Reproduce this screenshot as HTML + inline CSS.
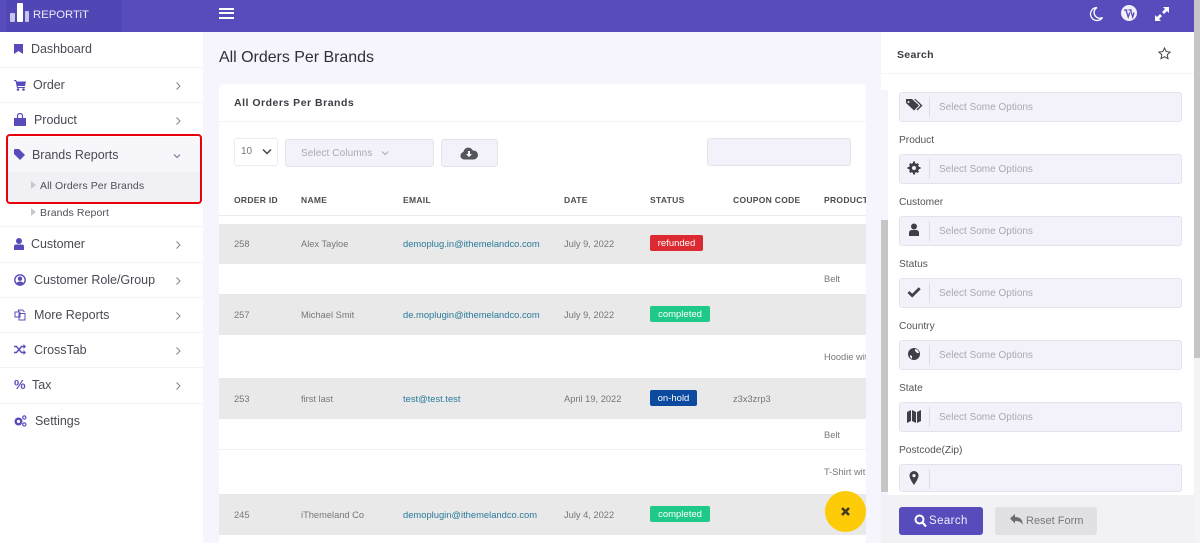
<!DOCTYPE html>
<html><head><meta charset="utf-8"><title>All Orders Per Brands</title>
<style>
html,body{margin:0;padding:0}
body{width:1200px;height:543px;overflow:hidden;position:relative;background:#f6f4fd;font-family:"Liberation Sans",sans-serif}
div,span,svg{position:absolute;box-sizing:border-box}
.t{white-space:nowrap;line-height:16px}
.m{font-size:12.5px;color:#4a4a55;letter-spacing:-.03px}
.l{left:0;width:203px;height:1px;background:#f3f2f7}
.chev{width:10px;height:12px;left:173px}
.ic{fill:#584cbd}
.h{font-size:8.5px;font-weight:bold;color:#4b4b52;letter-spacing:.3px;top:192px}
.c{font-size:9.300px;color:#777;margin-top:1px}
.e{font-size:9.400px;color:#2a7a9a;margin-top:1px}
.row{left:219px;width:647px;background:#e9e9e9}
.b{height:16px;border-radius:2px;color:#fff;font-size:9.500px;line-height:17px;text-align:center}
.f{left:899px;width:283px;height:30px;background:#f3f2fb;border:1px solid #e4e3ec;border-radius:3px}
.f i{position:absolute;left:29px;top:4px;width:1px;height:20px;background:#dedde6}
.p{font-size:10px;color:#a9a9b3;left:39px;top:7px}
.lab{font-size:10.200px;color:#555;left:899px;margin-top:1px}
.fi{left:6px;top:5px;width:16px;height:16px;fill:#3f3f46}
</style></head><body>

<!-- header -->
<div style="left:0;top:0;width:1194px;height:32px;background:#584cbd"></div>
<div style="left:6px;top:0;width:116px;height:32px;background:#5046b4"></div>
<div style="left:10px;top:13px;width:5px;height:9px;background:#c9c5ea;border-radius:1px"></div>
<div style="left:17px;top:3px;width:6px;height:19px;background:#fff;border-radius:1px"></div>
<div style="left:25px;top:11px;width:4px;height:11px;background:#c9c5ea;border-radius:1px"></div>
<div class="t" style="left:33px;top:7px;font-size:11.300px;color:#eceaf9">REPORTiT</div>
<div style="left:219px;top:8px;width:15px;height:2px;background:#fff"></div>
<div style="left:219px;top:12px;width:15px;height:2px;background:#fff"></div>
<div style="left:219px;top:16.500px;width:15px;height:2px;background:#fff"></div>
<svg style="left:1088px;top:6px" width="16" height="16" viewBox="0 0 16 16"><path d="M9 1.500A6.500 6.500 0 1 0 14.500 11.500 5.500 5.500 0 0 1 9 1.500Z" fill="none" stroke="#fff" stroke-width="1.300"/></svg>
<svg style="left:1121px;top:5px" width="16" height="16" viewBox="0 0 16 16"><circle cx="8" cy="8" r="8" fill="#f0effa"/><path d="M3 5h3.400M5 5l2.200 7 1.600-4.500M7.500 5h3.300M9.600 5l2.100 7 1.400-4.500" fill="none" stroke="#584cbd" stroke-width="1.300"/></svg>
<svg style="left:1155px;top:7px" width="14" height="14" viewBox="0 0 14 14"><path d="M8 0h6v6l-2-2-3 3-2-2 3-3ZM6 14H0V8l2 2 3-3 2 2-3 3Z" fill="#fff"/></svg>

<!-- sidebar -->
<div style="left:0;top:32px;width:203px;height:511px;background:#fff"></div>
<div class="l" style="top:67px"></div><div class="l" style="top:102px"></div><div class="l" style="top:226px"></div><div class="l" style="top:262px"></div><div class="l" style="top:297px"></div><div class="l" style="top:332px"></div><div class="l" style="top:367px"></div><div class="l" style="top:403px"></div>
<div style="left:7px;top:137px;width:193px;height:65px;background:#f7f6fb"></div>
<div style="left:7px;top:172px;width:193px;height:30px;background:#f1f0f5"></div>
<div style="left:6px;top:134px;width:196px;height:70px;border:2.500px solid #e8000b;border-radius:4px"></div>

<svg style="left:14px;top:44px" width="9" height="10" viewBox="0 0 9 10"><path class="ic" d="M0 0h9v10L4.500 7 0 10Z"/></svg>
<div class="t m" style="left:31px;top:41px">Dashboard</div>
<svg style="left:14px;top:79px" width="12" height="12" viewBox="0 0 12 12"><path class="ic" d="M0 1h2.200l.5 1.500H12L11 7H3.700L4 8h7v1H3L1.500 2H0Z"/><circle class="ic" cx="4" cy="10.500" r="1.300"/><circle class="ic" cx="9.500" cy="10.500" r="1.300"/></svg>
<div class="t m" style="left:33px;top:77px">Order</div>
<svg style="left:14px;top:113px" width="12" height="13" viewBox="0 0 12 13"><path class="ic" d="M0 5h12v8H0Z"/><path d="M3.500 5V3a2.500 2.500 0 0 1 5 0v2" fill="none" stroke="#584cbd" stroke-width="1.200"/></svg>
<div class="t m" style="left:34px;top:112px">Product</div>
<svg style="left:14px;top:149px" width="11" height="11" viewBox="0 0 11 11"><path class="ic" d="M0 1q0-1 1-1h4l6 6-5 5-6-6Z"/></svg>
<div class="t m" style="left:32px;top:147px">Brands Reports</div>
<svg style="left:31px;top:181px" width="5" height="8" viewBox="0 0 5 8"><path d="M0 0l5 4-5 4Z" fill="#c8c8cc"/></svg>
<div class="t" style="left:40px;top:178px;font-size:10.500px;color:#4f4f58;letter-spacing:.1px">All Orders Per Brands</div>
<svg style="left:31px;top:208px" width="5" height="8" viewBox="0 0 5 8"><path d="M0 0l5 4-5 4Z" fill="#c8c8cc"/></svg>
<div class="t" style="left:40px;top:205px;font-size:10.500px;color:#4f4f58;letter-spacing:.1px">Brands Report</div>
<svg style="left:14px;top:238px" width="10" height="12" viewBox="0 0 10 12"><circle class="ic" cx="5" cy="3" r="3"/><path class="ic" d="M0 12V8.500Q0 6.500 2 6.500H8Q10 6.500 10 8.500V12Z"/></svg>
<div class="t m" style="left:31px;top:236px">Customer</div>
<svg style="left:14px;top:274px" width="12" height="12" viewBox="0 0 12 12"><circle cx="6" cy="6" r="5.200" fill="none" stroke="#584cbd" stroke-width="1.400"/><circle class="ic" cx="6" cy="4.700" r="2.200"/><path class="ic" d="M2.200 9.500Q3.500 7.500 6 7.500T9.800 9.500Q8 11 6 11T2.200 9.500Z"/></svg>
<div class="t m" style="left:34px;top:272px">Customer Role/Group</div>
<svg style="left:14px;top:309px" width="12" height="12" viewBox="0 0 12 12"><path d="M4.500 3V1h4l2 2M1 3h5v5H1ZM5 4.500h6V11H5Z" fill="none" stroke="#584cbd" stroke-width="1"/></svg>
<div class="t m" style="left:34px;top:307px">More Reports</div>
<svg style="left:14px;top:344px" width="12" height="11" viewBox="0 0 12 11"><path d="M0 2.500h2.500L7.500 8.500H10M0 8.500h2.500L7.500 2.500H10" fill="none" stroke="#584cbd" stroke-width="1.400"/><path class="ic" d="M9.500 0L12 2.500 9.500 5ZM9.500 6L12 8.500 9.500 11Z"/></svg>
<div class="t m" style="left:34px;top:342px">CrossTab</div>
<div class="t" style="left:14px;top:377px;font-size:13px;font-weight:bold;color:#584cbd">%</div>
<div class="t m" style="left:32px;top:377px">Tax</div>
<svg style="left:14px;top:415px" width="13" height="12" viewBox="0 0 13 12"><circle cx="4.500" cy="6.500" r="2.800" fill="none" stroke="#584cbd" stroke-width="2.400"/><circle cx="10.300" cy="2.500" r="1.600" fill="none" stroke="#584cbd" stroke-width="1.200"/><circle cx="10.300" cy="9.500" r="1.600" fill="none" stroke="#584cbd" stroke-width="1.200"/></svg>
<div class="t m" style="left:35px;top:413px">Settings</div>
<svg class="chev" style="top:80px" viewBox="0 0 10 12"><path d="M3.500 2.500L7 6l-3.500 3.500" fill="none" stroke="#85858f" stroke-width="1"/></svg>
<svg class="chev" style="top:115px" viewBox="0 0 10 12"><path d="M3.500 2.500L7 6l-3.500 3.500" fill="none" stroke="#85858f" stroke-width="1"/></svg>
<svg style="left:171px;top:151px" width="12" height="10" viewBox="0 0 12 10"><path d="M3 3.500l3 3 3-3" fill="none" stroke="#6f6f90" stroke-width="1"/></svg>
<svg class="chev" style="top:239px" viewBox="0 0 10 12"><path d="M3.500 2.500L7 6l-3.500 3.500" fill="none" stroke="#85858f" stroke-width="1"/></svg>
<svg class="chev" style="top:275px" viewBox="0 0 10 12"><path d="M3.500 2.500L7 6l-3.500 3.500" fill="none" stroke="#85858f" stroke-width="1"/></svg>
<svg class="chev" style="top:310px" viewBox="0 0 10 12"><path d="M3.500 2.500L7 6l-3.500 3.500" fill="none" stroke="#85858f" stroke-width="1"/></svg>
<svg class="chev" style="top:345px" viewBox="0 0 10 12"><path d="M3.500 2.500L7 6l-3.500 3.500" fill="none" stroke="#85858f" stroke-width="1"/></svg>
<svg class="chev" style="top:380px" viewBox="0 0 10 12"><path d="M3.500 2.500L7 6l-3.500 3.500" fill="none" stroke="#85858f" stroke-width="1"/></svg>

<!-- main -->
<div class="t" style="left:219px;top:49px;font-size:16px;line-height:18px;color:#303038;letter-spacing:-.03px">All Orders Per Brands</div>
<div style="left:219px;top:84px;width:647px;height:459px;background:#fff;border-radius:4px 4px 0 0"></div>
<div class="t" style="left:234px;top:95px;font-size:10.500px;font-weight:bold;color:#3c3c44;letter-spacing:.5px">All Orders Per Brands</div>
<div style="left:219px;top:121px;width:647px;height:1px;background:#f4f4f6"></div>

<div style="left:234px;top:138px;width:44px;height:28px;background:#fff;border:1px solid #ebebf0;border-radius:3px"></div>
<div class="t" style="left:241px;top:144px;font-size:10px;color:#777">10</div>
<svg style="left:261px;top:148px" width="12" height="8" viewBox="0 0 12 8"><path d="M2 1.500l4 4 4-4" fill="none" stroke="#444" stroke-width="1.500"/></svg>
<div style="left:285px;top:139px;width:149px;height:28px;background:#f3f2fa;border:1px solid #e4e3ec;border-radius:3px"></div>
<div class="t" style="left:301px;top:146px;font-size:10px;color:#a9a9b3;letter-spacing:.1px">Select Columns</div>
<svg style="left:380px;top:150px" width="10" height="7" viewBox="0 0 10 7"><path d="M2 1.500l3 3 3-3" fill="none" stroke="#a9a9b3" stroke-width="1"/></svg>
<div style="left:441px;top:139px;width:57px;height:28px;background:#f3f2fa;border:1px solid #e4e3ec;border-radius:3px"></div>
<svg style="left:460px;top:146px" width="18" height="14" viewBox="0 0 18 14"><path d="M4 13.500a3.800 3.800 0 0 1-.6-7.500 5 5 0 0 1 9.500-1.500 4.500 4.500 0 0 1 1.100 9Z" fill="#55555c"/><path d="M8 5h2v3h2l-3 3.200L6 8h2Z" fill="#f3f2fa"/></svg>
<div style="left:707px;top:138px;width:144px;height:28px;background:#f3f2fa;border:1px solid #e4e3ec;border-radius:3px"></div>

<div class="t h" style="left:234px">ORDER ID</div>
<div class="t h" style="left:301px">NAME</div>
<div class="t h" style="left:403px">EMAIL</div>
<div class="t h" style="left:564px">DATE</div>
<div class="t h" style="left:650px">STATUS</div>
<div class="t h" style="left:733px">COUPON CODE</div>
<div class="t h" style="left:824px;width:42px;overflow:hidden">PRODUCT</div>
<div style="left:219px;top:215px;width:647px;height:1px;background:#ebebee"></div>

<div class="row" style="top:224px;height:40px"></div>
<div class="row" style="top:294px;height:41px"></div>
<div class="row" style="top:378px;height:41px"></div>
<div class="row" style="top:494px;height:41px"></div>
<div style="left:219px;top:449px;width:647px;height:1px;background:#efeff2"></div>

<div class="t c" style="left:234px;top:235px">258</div>
<div class="t c" style="left:301px;top:235px">Alex Tayloe</div>
<div class="t e" style="left:403px;top:235px">demoplug.in@ithemelandco.com</div>
<div class="t c" style="left:564px;top:235px">July 9, 2022</div>
<div class="b" style="left:650px;top:235px;width:53px;background:#dc2a32">refunded</div>
<div class="t c" style="left:824px;top:270px">Belt</div>

<div class="t c" style="left:234px;top:306px">257</div>
<div class="t c" style="left:301px;top:306px">Michael Smit</div>
<div class="t e" style="left:403px;top:306px">de.moplugin@ithemelandco.com</div>
<div class="t c" style="left:564px;top:306px">July 9, 2022</div>
<div class="b" style="left:650px;top:306px;width:60px;background:#1ec98a">completed</div>
<div class="t c" style="left:824px;top:348px;width:42px;overflow:hidden">Hoodie with</div>

<div class="t c" style="left:234px;top:390px">253</div>
<div class="t c" style="left:301px;top:390px">first last</div>
<div class="t e" style="left:403px;top:390px">test@test.test</div>
<div class="t c" style="left:564px;top:390px">April 19, 2022</div>
<div class="b" style="left:650px;top:390px;width:47px;background:#0b4a9e">on-hold</div>
<div class="t c" style="left:733px;top:390px">z3x3zrp3</div>
<div class="t c" style="left:824px;top:426px">Belt</div>
<div class="t c" style="left:824px;top:463px;width:42px;overflow:hidden">T-Shirt with</div>

<div class="t c" style="left:234px;top:506px">245</div>
<div class="t c" style="left:301px;top:506px">iThemeland Co</div>
<div class="t e" style="left:403px;top:506px">demoplugin@ithemelandco.com</div>
<div class="t c" style="left:564px;top:506px">July 4, 2022</div>
<div class="b" style="left:650px;top:506px;width:60px;background:#1ec98a">completed</div>

<div style="left:825px;top:491px;width:41px;height:41px;border-radius:50%;background:#fdcb08"></div>
<svg style="left:840px;top:506px" width="11" height="11" viewBox="0 0 11 11"><path d="M2 2l7 7M9 2l-7 7" stroke="#3f3a20" stroke-width="2.500"/></svg>

<!-- right panel -->
<div style="left:881px;top:32px;width:313px;height:511px;background:#fff"></div>
<div style="left:881px;top:73px;width:313px;height:1px;background:#f4f4f7"></div>
<div style="left:881px;top:90px;width:7px;height:453px;background:#f6f4fd"></div>
<div style="left:881px;top:220px;width:7px;height:272px;background:#c6c6c6"></div>
<div style="left:1194px;top:0;width:6px;height:543px;background:#f4f4f6"></div>
<div style="left:1194px;top:0;width:6px;height:358px;background:#c6c6c6"></div>
<div class="t" style="left:897px;top:47px;font-size:10.500px;font-weight:bold;color:#3a3a42;letter-spacing:.3px">Search</div>
<svg style="left:1158px;top:47px" width="13" height="13" viewBox="0 0 13 13"><path d="M6.500 1l1.700 3.600 3.900.5-2.900 2.700.8 3.900-3.500-2-3.500 2 .8-3.900L.9 5.100l3.900-.5Z" fill="none" stroke="#444" stroke-width="1"/></svg>

<div class="f" style="top:92px"><i></i><svg class="fi" style="left:5px;width:18px" viewBox="0 0 18 16"><path fill-rule="evenodd" d="M1 1h6l7 6.500-5 5L1 5ZM3.500 3a1 1 0 1 0 0 2 1 1 0 0 0 0-2Z"/><path d="M9 1h1.500l7 6.500-5 5-1-1 4-4Z"/></svg><span class="t p">Select Some Options</span></div>
<div class="t lab" style="top:132px">Product</div>
<div class="f" style="top:154px"><i></i><svg class="fi" viewBox="0 0 16 16"><circle cx="8" cy="8" r="3.500" fill="none" stroke="#3f3f46" stroke-width="3"/><path d="M7 1.500h2v2H7ZM7 12.500h2v2H7ZM1.500 7h2v2h-2ZM12.500 7h2v2h-2ZM3 4.500l1.500-1.500 1.500 1.500-1.500 1.500ZM10 11.500l1.500-1.500 1.500 1.500-1.500 1.500ZM3 11.500L4.500 10l1.500 1.500L4.500 13ZM10 4.500L11.500 3 13 4.500 11.500 6Z"/></svg><span class="t p">Select Some Options</span></div>
<div class="t lab" style="top:194px">Customer</div>
<div class="f" style="top:216px"><i></i><svg class="fi" viewBox="0 0 16 16"><circle cx="8" cy="4.500" r="3"/><path d="M3 14v-3q0-3 3-3h4q3 0 3 3v3Z"/></svg><span class="t p">Select Some Options</span></div>
<div class="t lab" style="top:256px">Status</div>
<div class="f" style="top:278px"><i></i><svg class="fi" viewBox="0 0 16 16"><path d="M2.500 8l3.700 3.700 7.500-7.500" fill="none" stroke="#3f3f46" stroke-width="2.800"/></svg><span class="t p">Select Some Options</span></div>
<div class="t lab" style="top:318px">Country</div>
<div class="f" style="top:340px"><i></i><svg class="fi" viewBox="0 0 16 16"><circle cx="8" cy="8" r="6"/><path d="M9 3l3 1 1 3-2 0-1-1-1-1ZM4 9l2 1v3L4 11Z" fill="#f3f2fb"/></svg><span class="t p">Select Some Options</span></div>
<div class="t lab" style="top:380px">State</div>
<div class="f" style="top:402px"><i></i><svg class="fi" viewBox="0 0 16 16"><path d="M1 4l4-2v11l-4 2ZM6 2l4 2v11l-4-2ZM11 4l4-2v11l-4 2Z"/></svg><span class="t p">Select Some Options</span></div>
<div class="t lab" style="top:442px">Postcode(Zip)</div>
<div class="f" style="top:464px;height:28px"><i></i><svg class="fi" viewBox="0 0 16 16"><path fill-rule="evenodd" d="M8 1a4.500 4.500 0 0 1 4.500 4.500C12.500 9 8 15 8 15S3.500 9 3.500 5.500A4.500 4.500 0 0 1 8 1ZM8 4a1.600 1.600 0 1 0 0 3.200A1.600 1.600 0 0 0 8 4Z"/></svg></div>

<div style="left:881px;top:495px;width:313px;height:48px;background:#f1f1f6"></div>
<div style="left:899px;top:507px;width:84px;height:28px;background:#584cbd;border-radius:3px"></div>
<svg style="left:914px;top:514px" width="13" height="14" viewBox="0 0 13 14"><circle cx="5.500" cy="5.500" r="4" fill="none" stroke="#fff" stroke-width="2"/><path d="M8.500 8.500l3.500 4" stroke="#fff" stroke-width="2.200"/></svg>
<div class="t" style="left:929px;top:513px;font-size:11.500px;color:#f0effa;letter-spacing:.4px">Search</div>
<div style="left:995px;top:507px;width:102px;height:28px;background:#e1e1e3;border-radius:3px"></div>
<svg style="left:1010px;top:514px" width="13" height="12" viewBox="0 0 13 12"><path d="M0 4.500L5 0v3c5 0 8 2.500 7.500 8-1-3-3.500-4-7.500-4v2.500Z" fill="#6c6c72"/></svg>
<div class="t" style="left:1026px;top:513px;font-size:11px;color:#77777d">Reset Form</div>
</body></html>
